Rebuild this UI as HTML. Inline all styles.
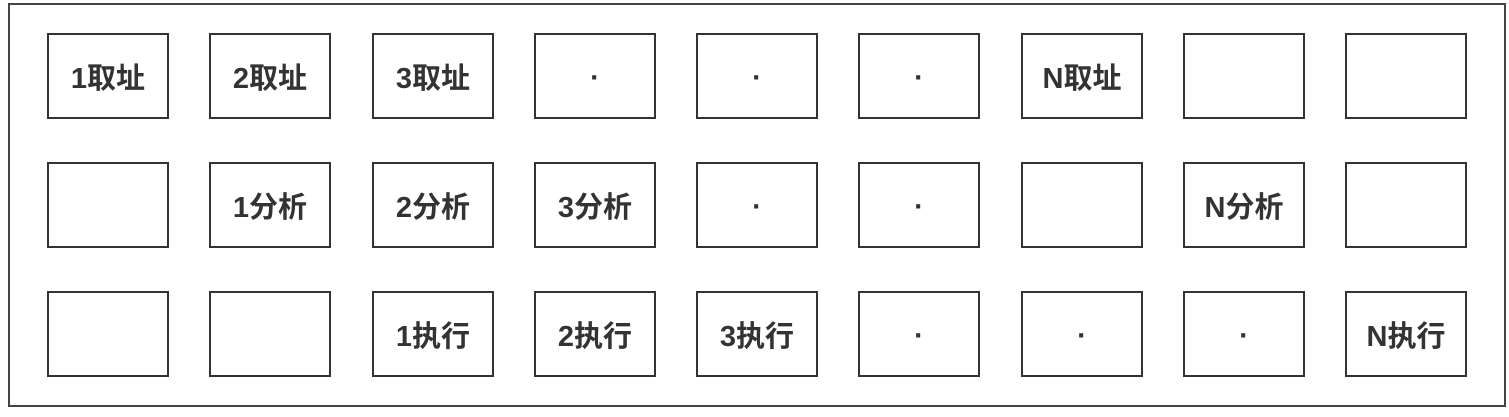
<!DOCTYPE html>
<html><head><meta charset="utf-8"><style>
html,body{margin:0;padding:0;background:#fff;width:1509px;height:417px;overflow:hidden}
.outer{position:absolute;left:8px;top:3px;width:1494px;height:400px;border:2px solid #444}
.b{position:absolute;width:118px;height:82px;border:2px solid #333;display:flex;align-items:center;justify-content:center;font-family:"Liberation Sans","Noto Sans CJK SC",sans-serif;font-size:29px;color:#333;font-weight:bold}
.d{padding-top:4px}
</style></head><body>
<div class="outer"></div>
<div id="c"></div>
<script>
var xs=[47,209,372,534,696,858,1021,1183,1345],ys=[33,162,291];
var t=[["1取址","2取址","3取址","·","·","·","N取址","",""],
["","1分析","2分析","3分析","·","·","","N分析",""],
["","","1执行","2执行","3执行","·","·","·","N执行"]];
var h="";for(var r=0;r<3;r++)for(var c=0;c<9;c++)h+='<div class="b" style="left:'+xs[c]+'px;top:'+ys[r]+'px"><span'+(t[r][c]=="·"?' class="d"':'')+'>'+t[r][c]+'</span></div>';
document.getElementById("c").innerHTML=h;
</script>
</body></html>
